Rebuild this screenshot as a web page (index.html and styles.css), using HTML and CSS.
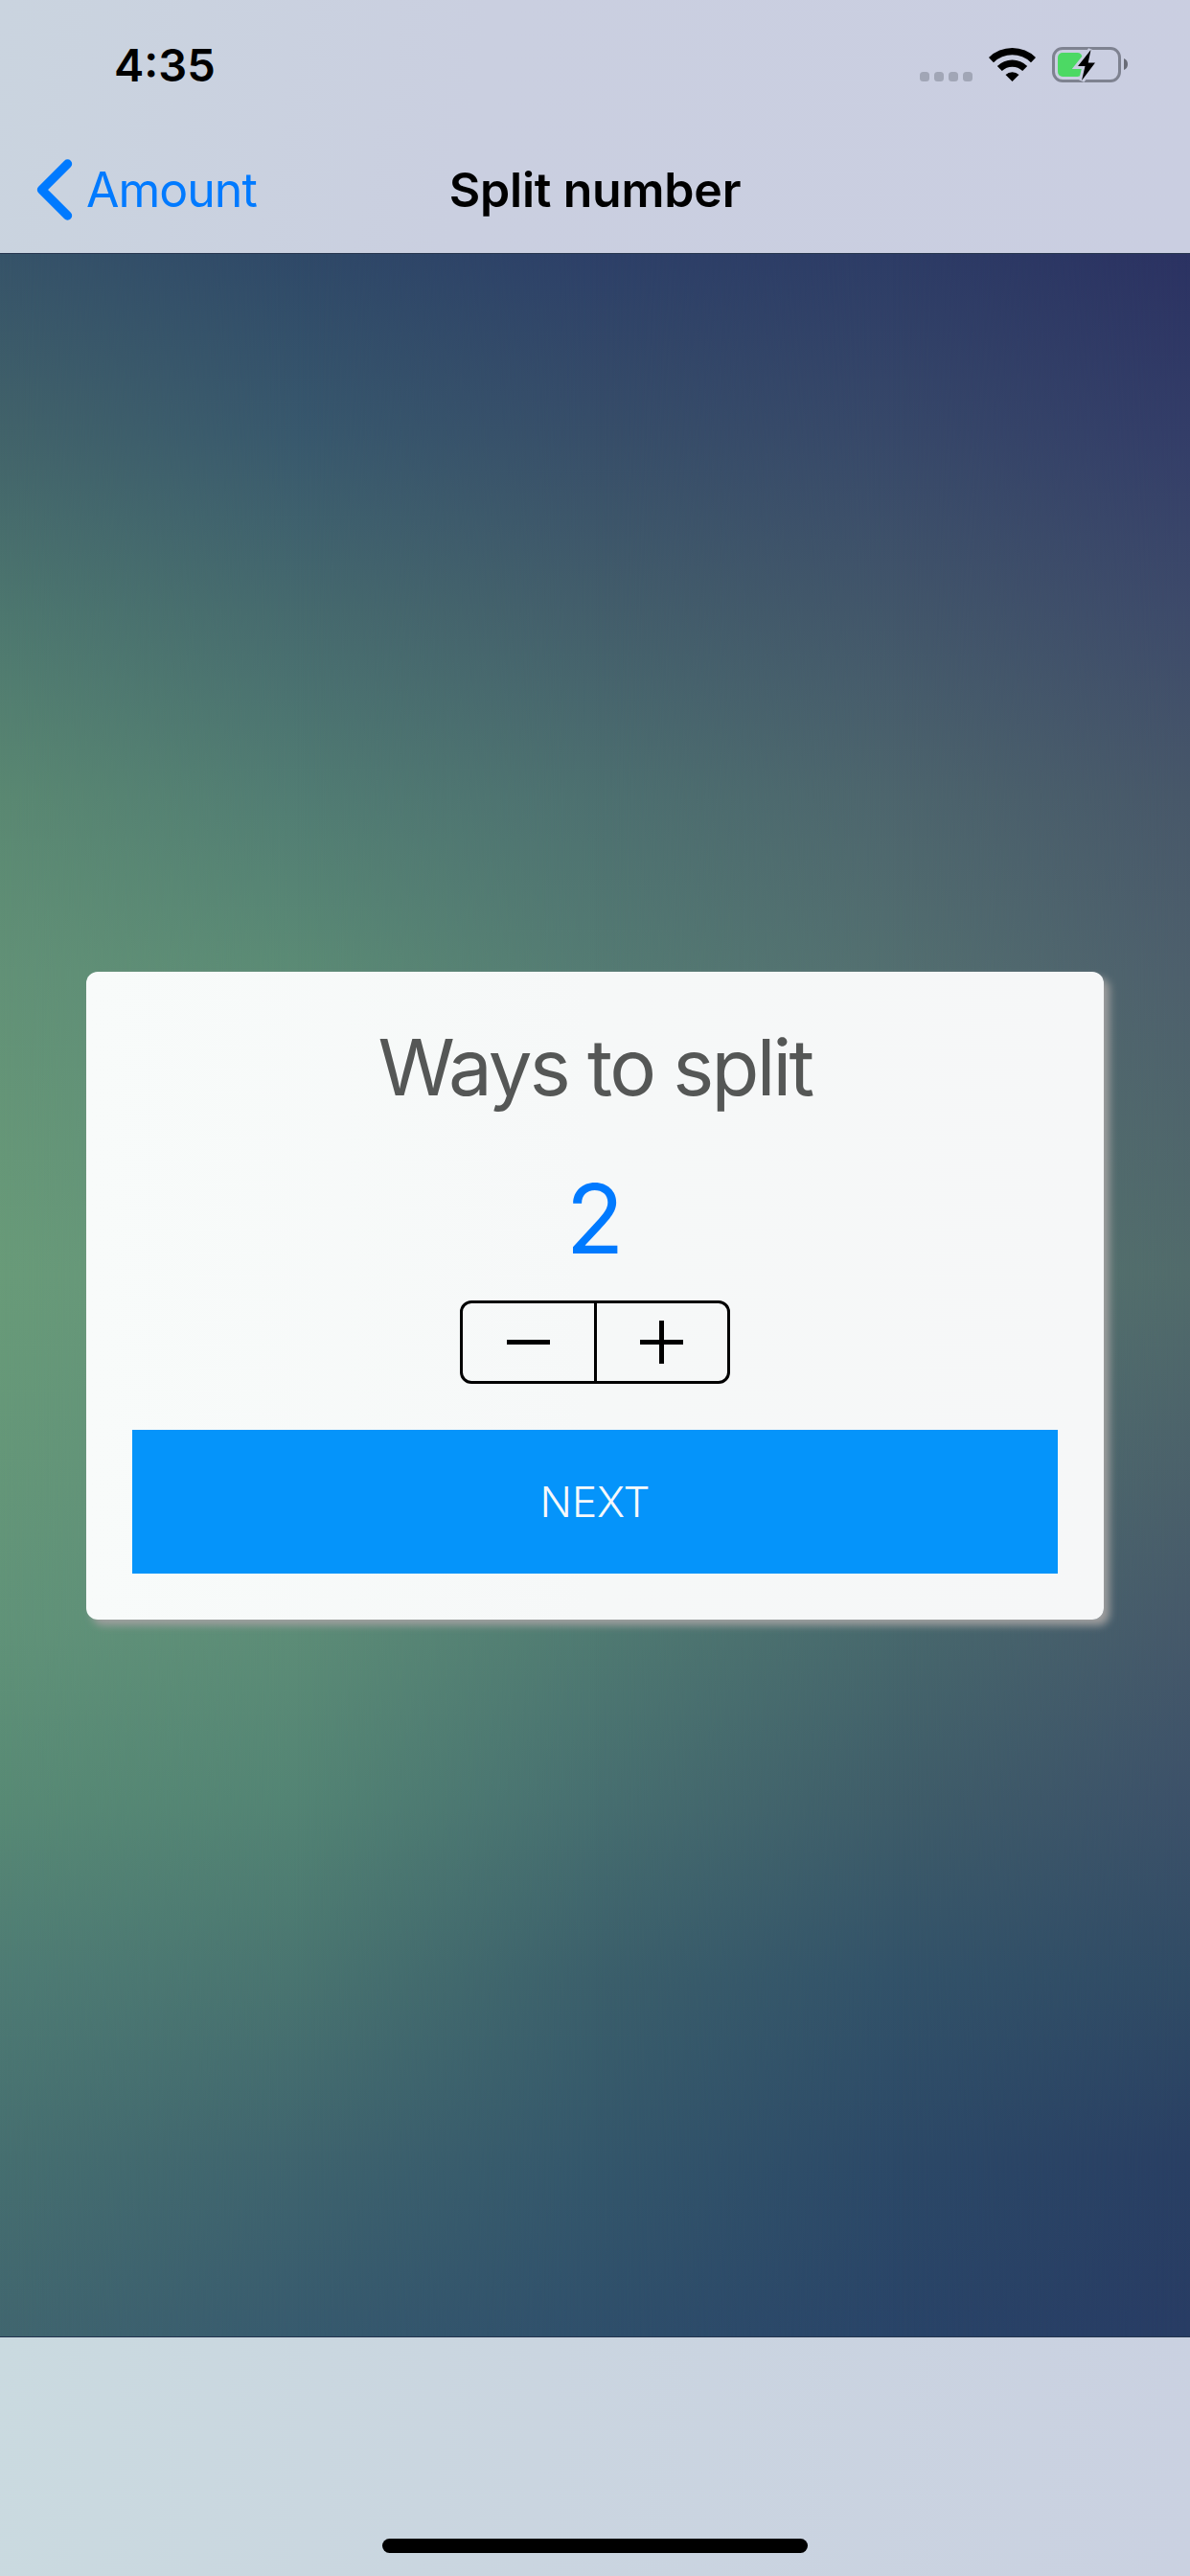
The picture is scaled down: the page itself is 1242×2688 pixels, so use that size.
FILE: index.html
```html
<!DOCTYPE html>
<html lang="en">
<head>
<meta charset="utf-8">
<title>Split number</title>
<link rel="stylesheet" href="styles.css">
</head>
<body>
<div class="screen">
  <header class="header">
    <div class="status">
      <span class="time">4:35</span>
      <svg class="status-icons" viewBox="960 45 220 45" aria-hidden="true">
        <g fill="#a1a6b6">
          <rect x="960" y="75" width="10" height="10" rx="3.5"/>
          <rect x="975" y="75" width="10" height="10" rx="3.5"/>
          <rect x="990" y="75" width="10" height="10" rx="3.5"/>
          <rect x="1005" y="75" width="10" height="10" rx="3.5"/>
        </g>
        <path d="M1032 60A35 35 0 0 1 1081 60L1076 65.2A28 28 0 0 0 1037 65.2Z"/>
        <path d="M1040.8 69A22.5 22.5 0 0 1 1072.2 69L1067.2 74A15.5 15.5 0 0 0 1045.8 74Z"/>
        <path d="M1049.5 78A10 10 0 0 1 1063.5 78L1056.5 85Z"/>
        <rect x="1099.5" y="50.5" width="69" height="34" rx="9.5" fill="none" stroke="#7e8290" stroke-width="3"/>
        <rect x="1104" y="55" width="25.5" height="25" rx="5" fill="#4cd964"/>
        <path d="M1173 61Q1177 62.5 1177 67Q1177 71.500 1173 73Z" fill="#696c77"/>
        <path d="M1138.500 52L1125 69H1132.500L1129 84L1143 65.500H1135.700Z" stroke="#cacee1" stroke-width="6"/>
        <path d="M1138.500 52L1125 69H1132.500L1129 84L1143 65.500H1135.700Z"/>
      </svg>
    </div>
    <nav class="navbar">
      <a class="back">
        <svg class="chevron" viewBox="0 0 38 64" aria-hidden="true"><path d="M32.500 5L5.500 32L32.500 59" fill="none" stroke="#007aff" stroke-width="9.400" stroke-linecap="round" stroke-linejoin="round"/></svg>
        <span class="back-label">Amount</span>
      </a>
      <h1 class="title">Split number</h1>
    </nav>
  </header>
  <main class="content">
    <div class="backdrop" aria-hidden="true">
      <div class="ramp ramp-1"></div>
      <div class="ramp ramp-2"></div>
      <div class="ramp ramp-3"></div>
      <div class="ramp ramp-4"></div>
      <div class="ramp ramp-5"></div>
    </div>
    <section class="card">
      <h2 class="card-title">Ways to split</h2>
      <div class="count">2</div>
      <div class="stepper">
        <button class="step" aria-label="Decrease"><svg viewBox="0 0 45 45"><path d="M0 20H45V25H0Z"/></svg></button>
        <button class="step" aria-label="Increase"><svg viewBox="0 0 45 45"><path d="M0 20H45V25H0ZM20 0H25V45H20Z"/></svg></button>
      </div>
      <button class="next">NEXT</button>
    </section>
  </main>
  <footer class="footer"><div class="home"></div></footer>
</div>
</body>
</html>
```
FILE: styles.css
```css
* { box-sizing: border-box; }
body { margin: 0; font-family: Inter, "Liberation Sans", sans-serif; }
h1, h2 { margin: 0; }
button { font: inherit; border: 0; margin: 0; padding: 0; background: none; }

.screen { width: 1242px; height: 2688px; display: flex; flex-direction: column; overflow: hidden; }

.header {
  height: 265px;
  border-bottom: 1px solid #26364f;
  background: linear-gradient(100deg, #cad4df 0%, #cacfe0 40%, #cacee1 100%);
}
.status { height: 132px; padding: 0 62px 0 119px; display: flex; justify-content: space-between; }
.time { font-size: 47px; font-weight: 600; line-height: 60px; margin-top: 38px; letter-spacing: 0; }
.status-icons { width: 220px; height: 45px; margin-top: 45px; }

.navbar { height: 132px; display: grid; grid-template-columns: 1fr auto 1fr; align-items: center; }
.back { display: flex; align-items: center; gap: 14px; padding-left: 38px; color: #007aff; }
.chevron { width: 38px; height: 64px; }
.back-label { font-size: 50px; line-height: 60px; letter-spacing: -1px; }
.title { font-size: 50px; font-weight: 600; line-height: 60px; letter-spacing: -0.2px; }

.content {
  flex: 1;
  position: relative;
  isolation: isolate;
  display: flex;
  flex-direction: column;
  padding: 749px 90px 0;
}

/* Vertical colour ramps, each faded in over the one to its left. */
.backdrop { position: absolute; inset: 0; z-index: -1; display: grid; }
.ramp { grid-area: 1 / 1; }
.ramp-1 {
  background: linear-gradient(#365369 0%, #42636a 8.6%, #4d776f 17.2%, #5a8872 26%, #629177 34.5%, #699b79 49%, #619379 65.5%, #588a75 74.2%, #4e7b74 82.8%, #466f70 91.4%, #41666f 100%);
}
.ramp-2 {
  background: linear-gradient(#2f4968 0%, #38586d 8.6%, #466a6e 17.2%, #517c73 26%, #5b8b75 34.5%, #62927a 49%, #5d8d77 65.5%, #538474 74.2%, #497470 82.8%, #3f646e 91.4%, #375a6e 100%);
  mask-image: linear-gradient(to right, transparent, #000 25%);
}
.ramp-3 {
  background: linear-gradient(#2d4068 0%, #374e69 8.6%, #435e6b 17.2%, #4d7070 26%, #547b73 34.5%, #5a8475 49%, #507b72 65.5%, #476f70 74.2%, #3b5f6b 82.8%, #34576b 91.4%, #2f4f6b 100%);
  mask-image: linear-gradient(to right, transparent 25%, #000 50%);
}
.ramp-4 {
  background: linear-gradient(#2d3c66 0%, #374869 8.6%, #42566a 17.2%, #4d656d 26%, #536f70 34.5%, #56766f 49%, #48696d 65.5%, #3f5d69 74.2%, #325269 82.8%, #2c4967 91.4%, #294468 100%);
  mask-image: linear-gradient(to right, transparent 50%, #000 75%);
}
.ramp-5 {
  background: linear-gradient(#2b3262 0%, #333d68 8.6%, #3d4a6a 17.2%, #475769 26%, #4d5f6c 34.5%, #516b6b 49%, #46596a 65.5%, #3c5169 74.2%, #304b65 82.8%, #293f63 91.4%, #283c64 100%);
  mask-image: linear-gradient(to right, transparent 75%, #000);
}

.card {
  height: 676px;
  padding: 0 48px 48px;
  display: flex;
  flex-direction: column;
  align-items: center;
  border-radius: 12px;
  background: linear-gradient(90deg, #f8fbfa, #f6f8f8 50%, #f6f7f8);
  box-shadow: 6px 6px 9px #a09f9f;
}
.card-title { margin-top: 50px; font-size: 81.500px; font-weight: 400; line-height: 100px; letter-spacing: -2.800px; color: #555756; }
.count { margin-top: 48px; font-size: 100px; line-height: 120px; color: #007aff; }
.stepper { margin-top: 25px; width: 282px; height: 87px; display: flex; border: 3px solid #000; border-radius: 12px; }
.step { flex: 1; display: grid; place-items: center; }
.step + .step { border-left: 3px solid #000; }
.step svg { width: 45px; height: 45px; display: block; }
.next { margin-top: auto; align-self: stretch; height: 150px; background: #0594fa; color: #f7f9fa; font-size: 44px; font-weight: 350; letter-spacing: 0; }

.footer {
  height: 250px;
  border-top: 1px solid #22344f;
  display: flex;
  align-items: flex-end;
  justify-content: center;
  padding-bottom: 24px;
  background: linear-gradient(95deg, #cadae0 0%, #cad5e0 45%, #cad1e1 100%);
}
.home { width: 444px; height: 15px; border-radius: 8px; background: #000; }
```
